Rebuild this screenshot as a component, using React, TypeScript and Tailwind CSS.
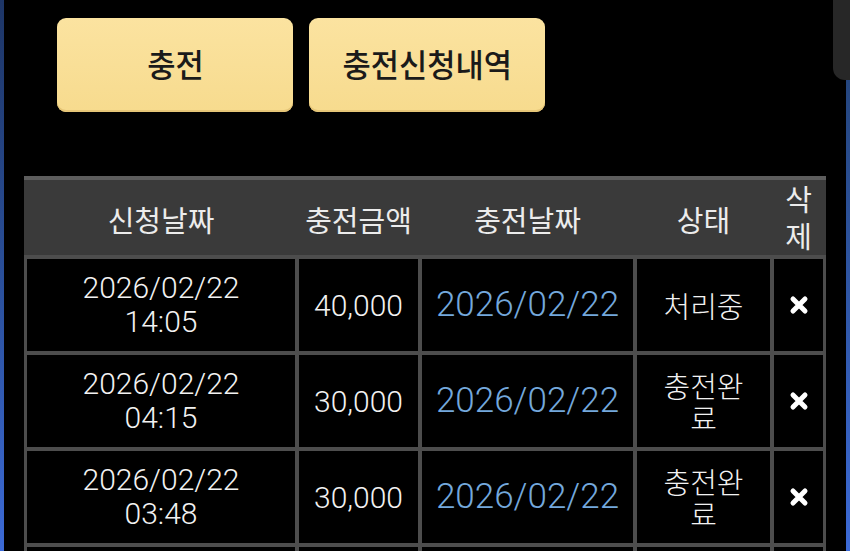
import React from "react";

type Row = {
  date: string;
  time: string;
  amount: string;
  chargeDate: string;
  status: string;
};

const rows: Row[] = [
  { date: "2026/02/22", time: "14:05", amount: "40,000", chargeDate: "2026/02/22", status: "처리중" },
  { date: "2026/02/22", time: "04:15", amount: "30,000", chargeDate: "2026/02/22", status: "충전완료" },
  { date: "2026/02/22", time: "03:48", amount: "30,000", chargeDate: "2026/02/22", status: "충전완료" },
];

const cols = "grid grid-cols-[268px_119px_211px_133px_49px]";
const kr = "font-['Noto_Sans_CJK_KR','Noto_Sans',sans-serif]";
const num = "font-['Roboto','Noto_Sans_CJK_KR',sans-serif]";

function DeleteIcon() {
  return (
    <svg width="20" height="20" viewBox="0 0 20 20" aria-hidden="true">
      <path d="M4 4 L16 16 M16 4 L4 16" stroke="#ffffff" strokeWidth="5" strokeLinecap="round" />
    </svg>
  );
}

function ActionButton({ label }: { label: string }) {
  return (
    <button
      className={`w-[236px] h-[94px] rounded-[9px] bg-gradient-to-b from-[#fbe3a0] to-[#f7db8e] shadow-[inset_0_-2px_0_#e6c678,0_2px_3px_rgba(0,0,0,0.6)] flex items-center justify-center pb-[5px] ${kr}`}
    >
      <span className="text-[32px] font-medium text-[#1a1a1a] scale-x-[0.96] inline-block">{label}</span>
    </button>
  );
}

export default function App() {
  return (
    <div className="w-[850px] h-[551px] bg-black overflow-hidden flex">
      {/* left edge accent */}
      <div className="w-[4px] h-full bg-gradient-to-b from-[#1d3566] via-[#2a4f9a] to-[#3c6ad6]" />

      <div className="flex-1 flex flex-col">
        <div className="flex gap-[16px] pl-[53px] pt-[18px]">
          <ActionButton label="충전" />
          <ActionButton label="충전신청내역" />
        </div>

        <div className="mt-[64px] ml-[20px] w-[802px]">
          {/* header */}
          <div className={`${cols} gap-x-[4px] px-[3px] border-t-[4px] border-[#5d5d5d] bg-[#3a3a3a] h-[79px] text-[#ececec] text-[29px] ${kr}`}>
            <div className="flex items-center justify-center pb-[8px]">신청날짜</div>
            <div className="flex items-center justify-center pb-[8px]">충전금액</div>
            <div className="flex items-center justify-center pb-[8px]">충전날짜</div>
            <div className="flex items-center justify-center pb-[8px]">상태</div>
            <div className="flex flex-col items-center justify-center leading-[37px] pb-[14px]">
              <span>삭</span>
              <span>제</span>
            </div>
          </div>

          {/* body */}
          <div className={`${cols} gap-[4px] p-[3px] pt-[4px] bg-[#4d4d4d]`}>
            {rows.map((r, i) => (
              <React.Fragment key={i}>
                <div className={`h-[92px] bg-black flex flex-col items-center justify-center text-[#f2f2f2] text-[30px] font-light leading-[34px] ${num}`}>
                  <span>{r.date}</span>
                  <span>{r.time}</span>
                </div>
                <div className={`h-[92px] bg-black flex items-center justify-center text-[#f2f2f2] text-[30px] font-light ${num}`}>
                  {r.amount}
                </div>
                <div className={`h-[92px] bg-black flex items-center justify-center text-[#74a8dc] text-[35px] font-light ${num}`}>
                  {r.chargeDate}
                </div>
                <div className={`h-[92px] bg-black flex items-center justify-center text-[#f2f2f2] text-[29px] font-light leading-[32px] ${kr}`}>
                  <span className="max-w-[92px] text-center">{r.status}</span>
                </div>
                <div className="h-[92px] bg-black flex items-center justify-center">
                  <DeleteIcon />
                </div>
              </React.Fragment>
            ))}
            {/* next row, scrolled below the fold */}
            <div className="h-[92px] bg-black" />
            <div className="h-[92px] bg-black" />
            <div className="h-[92px] bg-black" />
            <div className="h-[92px] bg-black" />
            <div className="h-[92px] bg-black" />
          </div>
        </div>
      </div>

      {/* right edge: scroll handle and accent */}
      <div className="w-[24px] h-full flex flex-col items-end">
        <div className="w-[17px] h-[80px] bg-[#272727] rounded-bl-[12px]" />
        <div className="w-[4px] flex-1 bg-gradient-to-b from-[#25467f] to-[#3c6ad6]" />
      </div>
    </div>
  );
}
